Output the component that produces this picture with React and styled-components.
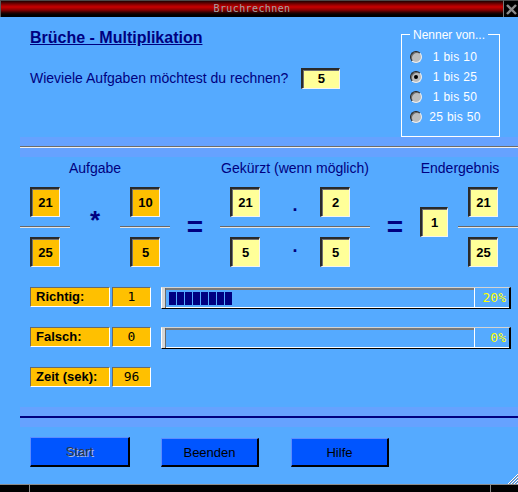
import React from 'react';
import styled, { createGlobalStyle } from 'styled-components';

const NAVY = '#000080';
const BG = '#55aaff';
const BAND = '#66a2ff';

const GlobalStyle = createGlobalStyle`
  html, body {
    margin: 0;
    padding: 0;
    background: #000;
  }
  body {
    font-family: "Liberation Sans", Arial, sans-serif;
  }
`;

const Window = styled.div`
  width: 518px;
  height: 492px;
  display: flex;
  flex-direction: column;
  overflow: hidden;
  background: #000;
`;

const TitleBar = styled.div`
  display: flex;
  height: 17px;
  flex: none;
`;

const TitleText = styled.div`
  flex: 1;
  box-sizing: border-box;
  border-left: 1px solid #5a5a5a;
  border-top: 1px solid #4a4a4a;
  background: linear-gradient(
    to bottom,
    #200000 0px,
    #9a0000 4px,
    #c80000 6px,
    #8a0000 9px,
    #200000 12px,
    #000 14px
  );
  color: #a4a4a4;
  font: 10px/15px "DejaVu Sans Mono", monospace;
  letter-spacing: 0.4px;
  text-align: center;
`;

const CloseBox = styled.div`
  width: 15px;
  box-sizing: border-box;
  border-left: 1px solid #777;
  border-top: 1px solid #4a4a4a;
  display: flex;
  align-items: center;
  justify-content: center;
`;

const Content = styled.div`
  position: relative;
  flex: none;
  height: 467px;
  background: ${BG};
  display: flex;
  flex-direction: column;
`;

const TopSection = styled.div`
  display: flex;
  justify-content: space-between;
  height: 120px;
`;

const Intro = styled.div`
  display: flex;
  flex-direction: column;
  padding: 11px 0 0 30px;
`;

const Heading = styled.h1`
  margin: 0;
  font-size: 16px;
  line-height: 19px;
  font-weight: bold;
  color: ${NAVY};
  text-decoration: underline;
`;

const Question = styled.div`
  display: flex;
  align-items: center;
  gap: 13px;
  margin-top: 20px;
  height: 22px;
  font-size: 14px;
  color: ${NAVY};
`;

const NumberBox = styled.div`
  box-sizing: border-box;
  width: ${(p) => p.$w || 30}px;
  height: ${(p) => p.$h || 30}px;
  background: ${(p) => (p.$orange ? '#ffc000' : '#ffff99')};
  border-style: solid;
  border-width: 2px 1px 1px 2px;
  border-color: #2a2a2a #f4f4f4 #f4f4f4 #2a2a2a;
  box-shadow: inset 1px 1px 0 #707070;
  display: flex;
  align-items: center;
  justify-content: center;
  font-size: 13px;
  font-weight: bold;
  color: #000;
  margin-top: ${(p) => p.$top || 0}px;
`;

const GroupBox = styled.div`
  position: relative;
  box-sizing: border-box;
  width: 99px;
  height: 103px;
  margin: 17px 18px 0 0;
  border: 1px solid #fff;
  padding: 12px 0 0 8px;
  display: flex;
  flex-direction: column;
`;

const Legend = styled.div`
  position: absolute;
  top: -7px;
  left: 8px;
  padding: 0 3px;
  background: ${BG};
  color: #fff;
  font-size: 12px;
  line-height: 14px;
`;

const RadioRow = styled.div`
  display: flex;
  align-items: center;
  height: 20px;
`;

const Radio = styled.span`
  box-sizing: border-box;
  width: 12px;
  height: 12px;
  border-radius: 50%;
  border: 1px solid;
  border-color: #222 #f0f0f0 #f0f0f0 #222;
  background: #bcbcbc;
  box-shadow: inset 1px 1px 0 #6a6a6a;
  display: flex;
  align-items: center;
  justify-content: center;
  &::after {
    content: '';
    width: 4px;
    height: 4px;
    border-radius: 50%;
    background: ${(p) => (p.$checked ? '#000' : 'transparent')};
  }
`;

const RadioLabel = styled.span`
  width: 60px;
  margin-left: 3px;
  text-align: center;
  color: #fff;
  font-size: 12px;
  letter-spacing: 0.3px;
`;

const Band = styled.div`
  margin-left: 20px;
  margin-top: ${(p) => p.$gap || 0}px;
  height: 20px;
  flex: none;
  background: ${BAND};
  display: flex;
  flex-direction: column;
`;

const Rule = styled.div`
  margin-top: 9px;
  border-top: ${(p) => (p.$dark ? `2px solid ${NAVY}` : '1px solid #6c6c6c')};
  border-bottom: ${(p) => (p.$dark ? 'none' : '1px solid #f0f0f0')};
`;

const HeaderRow = styled.div`
  display: flex;
  padding-left: 20px;
  margin-top: 2px;
  font-size: 14px;
  line-height: 18px;
  color: ${NAVY};
`;

const Header = styled.div`
  width: ${(p) => p.$w}px;
  text-align: center;
`;

const MathRow = styled.div`
  display: flex;
  padding-left: 20px;
  margin-top: 10px;
  height: 80px;
  flex: none;
`;

const Fraction = styled.div`
  width: ${(p) => p.$w}px;
  flex: none;
  display: flex;
  flex-direction: column;
`;

const FracRow = styled.div`
  display: flex;
  height: 30px;
  padding-left: 10px;
`;

const FracLine = styled.div`
  margin: 9px 0;
  border-top: 1px solid #686868;
  border-bottom: 1px solid #e4e4e4;
`;

const Dot = styled.span`
  width: 60px;
  padding-left: 10px;
  box-sizing: border-box;
  text-align: center;
  font-size: 18px;
  line-height: 18px;
  font-weight: bold;
  color: ${NAVY};
  margin-top: ${(p) => p.$top}px;
`;

const Operator = styled.div`
  width: 50px;
  flex: none;
  display: flex;
  align-items: center;
  justify-content: center;
  font-weight: bold;
  color: ${NAVY};
  font-size: ${(p) => p.$size}px;
  line-height: ${(p) => p.$size}px;
  padding-bottom: ${(p) => p.$lift || 0}px;
  box-sizing: border-box;
`;

const Spacer = styled.div`
  width: ${(p) => p.$w}px;
  flex: none;
`;

const Stats = styled.div`
  display: flex;
  flex-direction: column;
  gap: 18px;
  padding-left: 30px;
  margin-top: 20px;
`;

const StatRow = styled.div`
  display: flex;
  align-items: flex-start;
  height: 22px;
`;

const StatLabel = styled.div`
  box-sizing: border-box;
  width: 80px;
  height: 20px;
  background: #ffc000;
  border: 1px solid;
  border-color: #6a6a6a #fff #fff #6a6a6a;
  padding-left: 5px;
  font-size: 13px;
  line-height: 18px;
  font-weight: bold;
  color: #000;
`;

const StatValue = styled.div`
  box-sizing: border-box;
  width: 39px;
  height: 20px;
  margin-left: 2px;
  background: #ffc000;
  border: 1px solid;
  border-color: #6a6a6a #fff #fff #6a6a6a;
  text-align: center;
  font: 13px/18px "DejaVu Sans Mono", monospace;
  color: #000;
`;

const Bar = styled.div`
  box-sizing: border-box;
  display: flex;
  margin-left: 10px;
  width: 350px;
  height: 22px;
  border-top: 1px solid #d4d4d4;
  border-left: 1px solid #fff;
  border-right: 2px solid #000;
  border-bottom: 1px solid #000;
`;

const Handle = styled.div`
  width: 3px;
  background: #d6d6d6;
  border-right: 1px solid #6a6a6a;
`;

const Track = styled.div`
  flex: 1;
  box-sizing: border-box;
  display: flex;
  gap: 1px;
  padding: 2px 0 0 3px;
  border-top: 2px solid #7a7a7a;
  border-bottom: 1px solid #fff;
`;

const Block = styled.div`
  width: 7px;
  height: 13px;
  background: ${NAVY};
`;

const Percent = styled.div`
  width: 35px;
  box-sizing: border-box;
  border-left: 1px solid #fff;
  border-bottom: 1px solid #fff;
  padding-right: 3px;
  text-align: right;
  color: #ffff00;
  font: 13px/20px "DejaVu Sans Mono", monospace;
`;

const Buttons = styled.div`
  display: flex;
  align-items: flex-start;
  padding-left: 30px;
  margin-top: 10px;
`;

const Button = styled.button`
  box-sizing: border-box;
  width: ${(p) => (p.$focused ? 100 : 98)}px;
  height: ${(p) => (p.$focused ? 30 : 29)}px;
  margin: ${(p) => (p.$focused ? '0' : '1px 0 0 0')};
  margin-left: ${(p) => p.$gap || 0}px;
  padding: 0;
  background: #0055ff;
  border-style: solid;
  border-width: 1px 2px 2px 1px;
  border-color: #5c8cff #000 #000 #5c8cff;
  font-family: "Liberation Sans", Arial, sans-serif;
  font-size: 13px;
  color: ${(p) => (p.$focused ? '#2e3548' : '#000')};
  text-shadow: ${(p) => (p.$focused ? '1px 1px 0 #a8bce0' : 'none')};
`;

const Grip = styled.svg`
  position: absolute;
  right: 0;
  bottom: 0;
`;

const BottomFrame = styled.div`
  flex: 1;
  display: flex;
  border-top: 1px solid #8a8a8a;
`;

const FrameSegment = styled.div`
  width: ${(p) => (p.$w ? `${p.$w}px` : 'auto')};
  flex: ${(p) => (p.$w ? 'none' : 1)};
  border-left: ${(p) => (p.$edge ? '1px solid #8a8a8a' : 'none')};
`;

const choices = ['1 bis 10', '1 bis 25', '1 bis 50', '25 bis 50'];

const stats = [
  { label: 'Richtig:', value: '1', pct: 20 },
  { label: 'Falsch:', value: '0', pct: 0 },
  { label: 'Zeit (sek):', value: '96' },
];

const TRACK_WIDTH = 307;

const Progress = ({ pct }) => {
  const count = Math.round((TRACK_WIDTH * pct) / 100 / 8);
  return (
    <Bar>
      <Handle />
      <Track>
        {Array.from({ length: count }).map((_, i) => (
          <Block key={i} />
        ))}
      </Track>
      <Percent>{pct}%</Percent>
    </Bar>
  );
};

const App = () => {
  return (
    <Window>
      <GlobalStyle />
      <TitleBar>
        <TitleText>Bruchrechnen</TitleText>
        <CloseBox>
          <svg width="11" height="11" viewBox="0 0 11 11">
            <path d="M1 1 L10 10 M10 1 L1 10" stroke="#8c8c8c" strokeWidth="2.4" />
          </svg>
        </CloseBox>
      </TitleBar>

      <Content>
        <TopSection>
          <Intro>
            <Heading>Brüche - Multiplikation</Heading>
            <Question>
              Wieviele Aufgaben möchtest du rechnen?
              <NumberBox $w={39} $h={21}>5</NumberBox>
            </Question>
          </Intro>
          <GroupBox>
            <Legend>Nenner von...</Legend>
            {choices.map((c) => (
              <RadioRow key={c}>
                <Radio $checked={c === '1 bis 25'} />
                <RadioLabel>{c}</RadioLabel>
              </RadioRow>
            ))}
          </GroupBox>
        </TopSection>

        <Band>
          <Rule />
        </Band>

        <HeaderRow>
          <Header $w={150}>Aufgabe</Header>
          <Spacer $w={50} />
          <Header $w={150}>Gekürzt (wenn möglich)</Header>
          <Spacer $w={50} />
          <Header $w={80}>Endergebnis</Header>
        </HeaderRow>

        <MathRow>
          <Fraction $w={50}>
            <FracRow>
              <NumberBox $orange>21</NumberBox>
            </FracRow>
            <FracLine />
            <FracRow>
              <NumberBox $orange>25</NumberBox>
            </FracRow>
          </Fraction>
          <Operator $size={26} $lift={14}>*</Operator>
          <Fraction $w={50}>
            <FracRow>
              <NumberBox $orange>10</NumberBox>
            </FracRow>
            <FracLine />
            <FracRow>
              <NumberBox $orange>5</NumberBox>
            </FracRow>
          </Fraction>
          <Operator $size={28}>=</Operator>
          <Fraction $w={150}>
            <FracRow>
              <NumberBox>21</NumberBox>
              <Dot $top={9}>.</Dot>
              <NumberBox>2</NumberBox>
            </FracRow>
            <FracLine />
            <FracRow>
              <NumberBox>5</NumberBox>
              <Dot $top={0}>.</Dot>
              <NumberBox>5</NumberBox>
            </FracRow>
          </Fraction>
          <Operator $size={28}>=</Operator>
          <NumberBox $top={20}>1</NumberBox>
          <Spacer $w={10} />
          <Fraction $w={60}>
            <FracRow>
              <NumberBox>21</NumberBox>
            </FracRow>
            <FracLine />
            <FracRow>
              <NumberBox>25</NumberBox>
            </FracRow>
          </Fraction>
        </MathRow>

        <Stats>
          {stats.map((s) => (
            <StatRow key={s.label}>
              <StatLabel>{s.label}</StatLabel>
              <StatValue>{s.value}</StatValue>
              {s.pct !== undefined && <Progress pct={s.pct} />}
            </StatRow>
          ))}
        </Stats>

        <Band $gap={18}>
          <Rule $dark />
        </Band>

        <Buttons>
          <Button $focused>Start</Button>
          <Button $gap={31}>Beenden</Button>
          <Button $gap={32}>Hilfe</Button>
        </Buttons>

        <Grip width="13" height="13" viewBox="0 0 13 13">
          <path d="M13 3 L3 13 M13 6 L6 13 M13 9 L9 13 M13 12 L12 13" stroke="#fff" strokeWidth="1" />
          <path d="M13 4 L4 13 M13 7 L7 13 M13 10 L10 13" stroke="#7a8aa0" strokeWidth="1" />
        </Grip>
      </Content>

      <BottomFrame>
        <FrameSegment $w={29} />
        <FrameSegment $w={460} $edge />
        <FrameSegment $edge />
      </BottomFrame>
    </Window>
  );
};

export default App;
